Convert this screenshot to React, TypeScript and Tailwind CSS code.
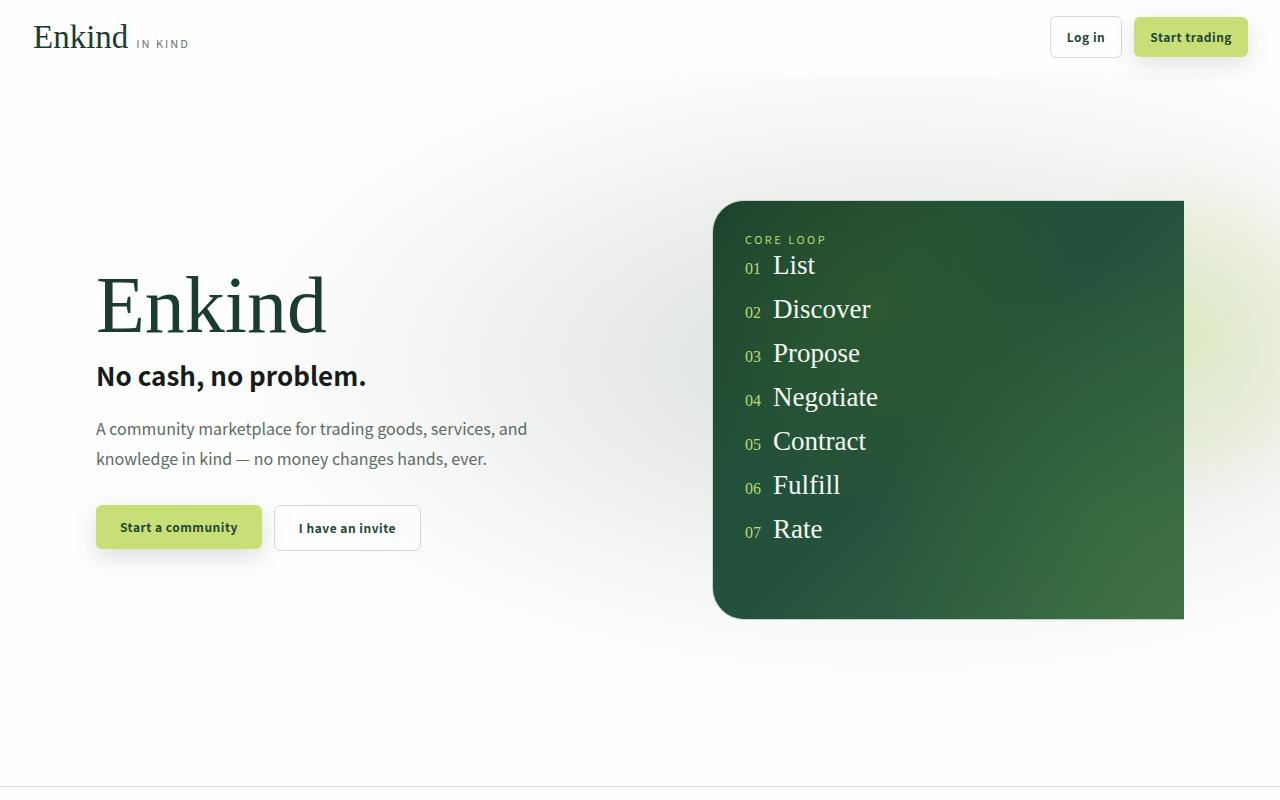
const SANS = "font-['Noto_Sans_CJK_SC','Noto_Sans',sans-serif]";
const SERIF = "font-['Liberation_Serif',serif]";

const steps = ["List", "Discover", "Propose", "Negotiate", "Contract", "Fulfill", "Rate"];

function Header() {
  return (
    <header className="relative z-10 flex items-center justify-between bg-[#fefefe]/85 px-8 py-4">
      <a href="#top" className="flex items-baseline gap-2 pl-px text-[#1b3d2f]">
        <span className={`${SERIF} text-[33px] font-normal leading-10`}>Enkind</span>
        <span className="text-[11px] leading-4 tracking-[2px] text-[#66736c]">IN KIND</span>
      </a>
      <nav className="flex items-center gap-3 text-[12px] font-bold leading-5 tracking-[0.5px] text-[#1f4635]">
        <button className="rounded-md border border-[#d6dad8] bg-[#fefefe] px-4 py-[10px]">Log in</button>
        <button className="rounded-md bg-[#c8df78] px-4 py-[10px] shadow-[0_8px_24px_rgba(27,61,47,0.14)]">
          Start trading
        </button>
      </nav>
    </header>
  );
}

function Intro() {
  return (
    <div>
      <h1 className={`${SERIF} text-[80px] font-normal leading-[72px] text-[#1b3d2f]`}>Enkind</h1>
      <p className="mt-4 text-[26px] font-bold leading-9 text-[#161d19]">No cash, no problem.</p>
      <p className="mt-5 max-w-[460px] text-[16px] leading-[30px] text-[#5c6b63]">
        A community marketplace for trading goods, services, and knowledge in kind — no money changes hands, ever.
      </p>
      <div className="mt-8 flex items-start gap-3 text-[12px] font-bold leading-5 tracking-[0.5px] text-[#1f4635]">
        <button className="rounded-md bg-[#c8df78] px-6 py-3 shadow-[0_8px_24px_rgba(27,61,47,0.16)]">
          Start a community
        </button>
        <button className="rounded-md border border-[#d3d8d5] bg-[#fefefe]/60 px-6 py-3">I have an invite</button>
      </div>
    </div>
  );
}

function CoreLoop() {
  return (
    <section className="min-h-[420px] rounded-l-[32px] border-y border-l border-[#c3d8c8] bg-[radial-gradient(ellipse_45%_50%_at_35%_25%,rgba(55,100,35,0.4),transparent),radial-gradient(ellipse_50%_65%_at_85%_78%,rgba(60,120,50,0.38),transparent),linear-gradient(135deg,#1c402e_0%,#225039_30%,#24513c_50%,#2d5c42_70%,#42704a_100%)] bg-origin-border px-8 pt-[30px] pb-14">
      <h2 className="mb-0.5 text-[11px] leading-4 tracking-[2.5px] text-[#b9dc70]">CORE LOOP</h2>
      <ol>
        {steps.map((step, i) => (
          <li key={step} className={`${SERIF} flex h-11 items-baseline gap-3`}>
            <span className="text-[16px] leading-8 text-[#b9dc70]">0{i + 1}</span>
            <span className="text-[27px] leading-8 text-[#f5faf3]">{step}</span>
          </li>
        ))}
      </ol>
    </section>
  );
}

export default function App() {
  return (
    <div id="top" className={`${SANS} min-h-screen bg-[#fefefe] bg-[radial-gradient(ellipse_180px_200px_at_93%_335px,rgba(200,223,120,0.34),rgba(200,223,120,0.17)_50%,rgba(200,223,120,0.03)_85%,transparent),radial-gradient(ellipse_680px_330px_at_70%_360px,rgba(27,61,47,0.17),rgba(27,61,47,0.08)_50%,rgba(27,61,47,0.02)_85%,transparent)] bg-no-repeat`}>
      <Header />
      <main className="grid grid-cols-[1fr_472px] items-center gap-16 border-b border-[#d9dcda] px-24 pt-[126px] pb-[166px]">
        <Intro />
        <CoreLoop />
      </main>
    </div>
  );
}
